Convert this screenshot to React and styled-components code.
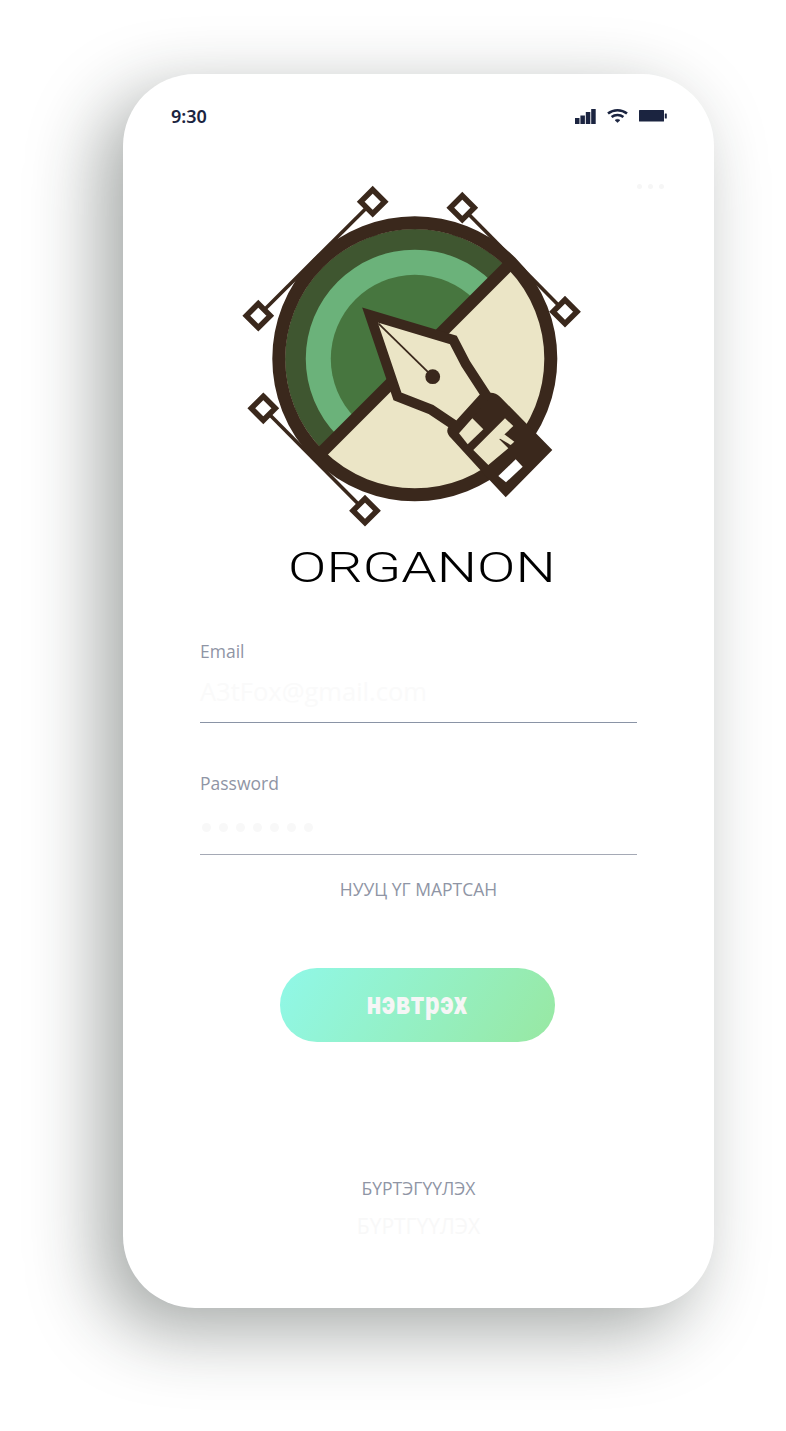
import React from 'react';
import styled, { createGlobalStyle } from 'styled-components';

const GlobalStyle = createGlobalStyle`
  html, body {
    margin: 0;
    padding: 0;
    background: #fff;
  }
  body {
    font-family: 'Open Sans', 'Liberation Sans', sans-serif;
    overflow: hidden;
  }
`;

const Page = styled.div`
  width: 786px;
  height: 1431px;
  padding: 74px 0 0 123px;
  box-sizing: border-box;
`;

const Phone = styled.div`
  position: relative;
  width: 591px;
  height: 1234px;
  background: #fff;
  border-radius: 72px;
  box-shadow: -22px 22px 72px rgba(28, 38, 32, 0.4);
  display: flex;
  flex-direction: column;
`;

const StatusBar = styled.div`
  height: 106px;
  padding: 28px 47px 0 48px;
  box-sizing: border-box;
  display: flex;
  justify-content: space-between;
  align-items: flex-start;
`;

const Time = styled.span`
  font-family: 'Noto Sans', 'Open Sans', sans-serif;
  font-size: 18px;
  line-height: 28px;
  font-weight: 600;
  color: #1b2440;
`;

const StatusIcons = styled.div`
  display: flex;
  align-items: center;
  height: 28px;
  gap: 11px;
`;

const MoreDots = styled.div`
  position: absolute;
  top: 110px;
  right: 50px;
  display: flex;
  gap: 6px;

  span {
    width: 5px;
    height: 5px;
    border-radius: 50%;
    background: #f6f6f6;
  }
`;

const Logo = styled.svg`
  display: block;
  margin-left: 112px;
`;

const Title = styled.div`
  margin-top: 10px;
  height: 56px;
  line-height: 56px;
  text-align: center;
  padding-left: 5px;
  font-family: 'Roboto', sans-serif;
  font-weight: 300;
  font-size: 42px;
  color: #000;
  transform: scaleX(1.35);
`;

const Form = styled.div`
  margin-top: 43px;
  padding: 0 77px;
  display: flex;
  flex-direction: column;
`;

const Field = styled.div`
  margin-bottom: ${(p) => p.$gap || 0}px;
`;

const Label = styled.div`
  font-size: 17.5px;
  line-height: 24px;
  color: #8f95a5;
`;

const Value = styled.div`
  height: 60px;
  padding-bottom: 4px;
  box-sizing: border-box;
  display: flex;
  align-items: center;
  border-bottom: 1px solid ${(p) => p.$line};
  font-size: 25.5px;
  color: #fafafa;
`;

const PassDots = styled.div`
  display: flex;
  gap: 8px;
  padding-left: 2px;
  margin-top: 10px;

  span {
    width: 9px;
    height: 9px;
    border-radius: 50%;
    background: #f8f8f8;
  }
`;

const TextLink = styled.div`
  text-align: center;
  font-size: 17.5px;
  line-height: 24px;
  color: #8f95a5;
  margin-top: ${(p) => p.$top}px;
`;

const FaintLink = styled(TextLink)`
  font-size: 21px;
  color: #f8f8f8;
`;

const LoginButton = styled.button`
  display: block;
  width: 275px;
  height: 74px;
  margin: 67px 0 0 80px;
  padding: 0 0 5px;
  border: 0;
  border-radius: 37px;
  background: linear-gradient(122deg, #90f8e8 0%, #98e8a2 100%);
  font-family: 'Roboto', sans-serif;
  font-weight: 900;
  font-size: 32px;
  color: #f6f6f6;

  span {
    display: inline-block;
    letter-spacing: 1px;
    transform: scaleX(0.8);
  }
`;

const Diamond = ({ x, y }) => (
  <polygon
    points={`${x},${y - 12} ${x + 12},${y} ${x},${y + 12} ${x - 12},${y}`}
    fill='#fff'
    stroke='#3a281c'
    strokeWidth='5.5'
  />
);

const App = () => {
  return (
    <>
      <GlobalStyle />
      <Page>
        <Phone>
          <StatusBar>
            <Time>9:30</Time>
            <StatusIcons>
              <svg width='21' height='15' viewBox='0 0 21 15' fill='#1b2440'>
                <rect x='0' y='9' width='4.5' height='6' />
                <rect x='5.4' y='6.5' width='4.5' height='8.5' />
                <rect x='10.8' y='3' width='4.5' height='12' />
                <rect x='16.2' y='0' width='4.5' height='15' />
              </svg>
              <svg width='21' height='14' viewBox='0 0 21 14' fill='none' stroke='#1b2440'>
                <path d='M1 4.6 C6.5 0.2 14.5 0.2 20 4.6' strokeWidth='2.6' />
                <path d='M4.6 8 C8 5.4 13 5.4 16.4 8' strokeWidth='2.6' />
                <path d='M8 11.2 L10.5 13.6 L13 11.2 C11.5 10 9.5 10 8 11.2 Z' fill='#1b2440' strokeWidth='0.5' />
              </svg>
              <svg width='28' height='12' viewBox='0 0 28 12' fill='#1b2440'>
                <rect x='0' y='0' width='25' height='11.5' rx='0.5' />
                <rect x='25.8' y='3.4' width='2' height='5' rx='0.5' />
              </svg>
            </StatusIcons>
          </StatusBar>
          <MoreDots>
            <span />
            <span />
            <span />
          </MoreDots>

          <Logo width='360' height='350' viewBox='235 180 360 350'>
            {/* handles */}
            <g stroke='#3a281c' strokeWidth='3.6'>
              <line x1='372.7' y1='201.7' x2='258.3' y2='315.7' />
              <line x1='462.3' y1='207.7' x2='565' y2='311.7' />
              <line x1='263.3' y1='408.3' x2='365' y2='510.7' />
            </g>
            <Diamond x={372.7} y={201.7} />
            <Diamond x={258.3} y={315.7} />
            <Diamond x={462.3} y={207.7} />
            <Diamond x={565} y={311.7} />
            <Diamond x={263.3} y={408.3} />
            <Diamond x={365} y={510.7} />

            {/* disc */}
            <circle cx='414.8' cy='358.8' r='136' fill='#ebe5c6' />
            <path d='M506.5 267 A129.7 129.7 0 0 0 323.1 450.5 Z' fill='#3f5630' />
            <path d='M491.9 281.7 A109 109 0 0 0 337.7 435.9 Z' fill='#6bb27a' />
            <path d='M474.2 299.4 A84 84 0 0 0 355.4 418.2 Z' fill='#47763f' />
            <circle cx='414.8' cy='358.8' r='136' fill='none' stroke='#3a281c' strokeWidth='13' />
            <line x1='512' y1='262' x2='318' y2='456' stroke='#3a281c' strokeWidth='12' />

            {/* collar */}
            <path
              d='M450 425 L476.7 400 L486 393.5 Q494 391 500 396.7 L552.3 450 L505.7 497.3 L486.7 477 L451 438 Q444 431 450 425 Z'
              fill='#3a281c'
            />
            <polygon points='459,433.3 472.3,418.3 483.3,429.3 467.7,444.3' fill='#ebe5c6' />
            <polygon points='473.3,450 505,418.3 513.3,426 499.3,439.3 508.3,448.3 488.3,465' fill='#ebe5c6' />
            <polygon points='499.3,438.3 504.3,434.3 514.3,441.7 510.7,445' fill='#ebe5c6' />
            <polygon points='498.3,476 515.7,459.3 522.7,466.7 506,482.3' fill='#fff' />

            {/* pen nib */}
            <path
              d='M370 315 L453.3 340 L465.8 364 L486 395 L457 427 L431 409.5 L397.5 396.5 Z'
              fill='#ebe5c6'
              stroke='#3a281c'
              strokeWidth='10'
              strokeMiterlimit='6'
            />
            <line x1='378.3' y1='323.3' x2='432.7' y2='376.7' stroke='#3a281c' strokeWidth='1.8' />
            <circle cx='432.7' cy='376.7' r='7.4' fill='#3a281c' />
          </Logo>

          <Title>ORGANON</Title>

          <Form>
            <Field $gap={48}>
              <Label>Email</Label>
              <Value $line='#8a94a6'>A3tFox@gmail.com</Value>
            </Field>
            <Field>
              <Label>Password</Label>
              <Value $line='#a5a9b5'>
                <PassDots>
                  <span />
                  <span />
                  <span />
                  <span />
                  <span />
                  <span />
                  <span />
                </PassDots>
              </Value>
            </Field>
            <TextLink $top={22}>НУУЦ ҮГ МАРТСАН</TextLink>
            <LoginButton>
              <span>нэвтрэх</span>
            </LoginButton>
            <TextLink $top={134}>БҮРТЭГҮҮЛЭХ</TextLink>
            <FaintLink $top={14}>БҮРТГҮҮЛЭХ</FaintLink>
          </Form>
        </Phone>
      </Page>
    </>
  );
};

export default App;
